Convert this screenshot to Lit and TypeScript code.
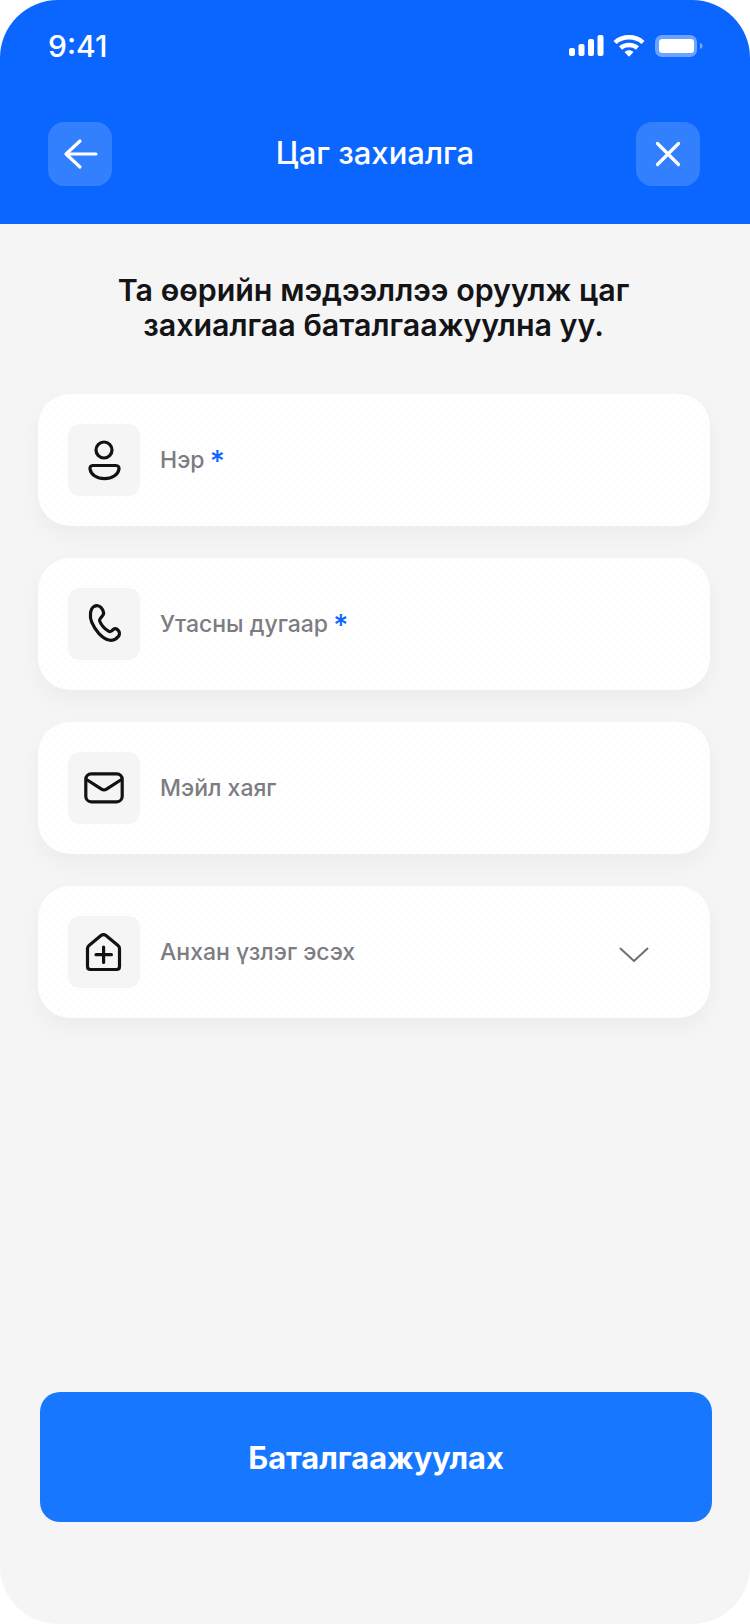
import { LitElement, css, html, svg } from "lit";
import { customElement } from "lit/decorators.js";

const personIcon = svg`
  <circle cx="36" cy="26" r="8" />
  <path d="M24.5 41.5H48C50 41.5 51.3 43 51 45C50.1 50.8 44 54.7 36.5 54.7C29 54.7 22.9 50.8 22 45C21.7 43 23 41.5 24.5 41.5Z" />
`;

const phoneIcon = svg`
  <path d="M26 18.5C29 16.8 32.3 18 34.1 20.8C35.7 23.3 35.9 25.9 34.7 27.5L32.3 30.4C31.5 31.4 31.4 32.4 31.9 33.6C33.7 37.6 36.7 40.9 40.5 43.2C41.6 43.8 42.7 43.7 43.6 42.9L45.2 41.6C46.5 40.5 48.3 40.6 49.5 41.7L50.4 42.6C51.8 44.2 51.9 46.8 50.3 48.6C48.1 51.4 44.3 52.8 40.9 52C34 50.3 27.1 42.4 23.7 34.2C21.5 29 21.9 21 26 18.5Z" />
`;

const mailIcon = svg`
  <rect x="17.8" y="21.8" width="36.4" height="28" rx="5.5" />
  <path d="M18.5 27.5L33.5 37.2C35.1 38.2 36.9 38.2 38.5 37.2L53.5 27.5" />
`;

const clinicIcon = svg`
  <path d="M33 19.6C34.5 18.4 36.5 18.4 38 19.6L50 29.4C51 30.2 51.5 31.2 51.5 32.4V50.5C51.5 52.4 50.4 53.5 48.5 53.5H22.5C20.6 53.5 19.5 52.4 19.5 50.5V32.4C19.5 31.2 20 30.2 21 29.4Z" />
  <path d="M35.6 31V46.5M28 38.7H43.4" />
`;

interface Field {
  label: string;
  required?: boolean;
  icon: unknown;
  select?: boolean;
}

const fields: Field[] = [
  { label: "Нэр", required: true, icon: personIcon },
  { label: "Утасны дугаар", required: true, icon: phoneIcon },
  { label: "Мэйл хаяг", icon: mailIcon },
  { label: "Анхан үзлэг эсэх", icon: clinicIcon, select: true },
];

@customElement("app-root")
export class AppRoot extends LitElement {
  static styles = css`
    :host {
      display: block;
      width: 750px;
      height: 1624px;
      background: #ffffff;
      font-family: "Inter", "Noto Sans", sans-serif;
    }

    .screen {
      display: flex;
      flex-direction: column;
      height: 100%;
      border-radius: 58px;
      overflow: hidden;
      background: #f5f5f6;
    }

    .header {
      display: flex;
      flex-direction: column;
      height: 224px;
      flex: none;
      background: #0a66ff;
      color: #ffffff;
    }

    .status {
      display: flex;
      align-items: center;
      justify-content: space-between;
      height: 36px;
      margin-top: 28px;
      padding: 0 46px 0 48px;
    }

    .time {
      font-size: 30px;
      font-weight: 500;
      line-height: 36px;
    }

    .status svg {
      display: block;
    }

    .nav {
      display: flex;
      align-items: center;
      justify-content: space-between;
      margin-top: 58px;
      padding: 0 50px 0 48px;
    }

    .nav-btn {
      display: flex;
      align-items: center;
      justify-content: center;
      width: 64px;
      height: 64px;
      border-radius: 16px;
      background: #3380ff;
    }

    .nav-btn svg {
      fill: none;
      stroke: #ffffff;
      stroke-width: 3.2;
      stroke-linecap: round;
      stroke-linejoin: round;
    }

    .title {
      padding: 0 0 2px 2px;
      font-size: 31px;
      font-weight: 500;
      line-height: 40px;
    }

    .lead {
      margin: 49px 0 0;
      padding-right: 3px;
      font-size: 30.4px;
      font-weight: 600;
      line-height: 35px;
      text-align: center;
      color: #141416;
    }

    .form {
      display: flex;
      flex-direction: column;
      gap: 32px;
      width: 672px;
      margin: 51px 0 0 38px;
    }

    .card {
      display: flex;
      align-items: center;
      gap: 20px;
      height: 132px;
      padding: 0 30px;
      box-sizing: border-box;
      border-radius: 32px;
      background-color: #ffffff;
      background-image: radial-gradient(circle, #f9f9f9 0.7px, transparent 1px),
        radial-gradient(circle, #f9f9f9 0.7px, transparent 1px);
      background-size: 8px 8px;
      background-position: 0 0, 4px 4px;
      box-shadow: 0 10px 24px rgba(20, 20, 30, 0.04);
    }

    .tile {
      width: 72px;
      height: 72px;
      flex: none;
      border-radius: 12px;
      background: #f5f5f6;
    }

    .tile svg {
      display: block;
      fill: none;
      stroke: #121214;
      stroke-width: 3.2;
      stroke-linecap: round;
      stroke-linejoin: round;
    }

    .label {
      flex: 1;
      font-size: 23px;
      font-weight: 500;
      line-height: 30px;
      color: #7c7c82;
    }

    .req {
      margin-left: -1px;
      color: #0a66ff;
      font-size: 29px;
      font-weight: 500;
      line-height: 0;
      vertical-align: -3px;
    }

    .chevron {
      flex: none;
      margin: 5px 31px 0 0;
      fill: none;
      stroke: #6e6e73;
      stroke-width: 2;
      stroke-linecap: round;
      stroke-linejoin: round;
    }

    .confirm {
      display: flex;
      align-items: center;
      justify-content: center;
      width: 672px;
      height: 130px;
      flex: none;
      margin: auto 0 102px 40px;
      border-radius: 20px;
      background: #1877ff;
      color: #ffffff;
      font-size: 30.8px;
      font-weight: 700;
    }
  `;

  private renderStatusIcons() {
    return html`
      <svg width="136" height="24" viewBox="0 0 136 24" fill="#ffffff">
        <rect x="1" y="14" width="6" height="8" rx="2" />
        <rect x="10.5" y="10" width="6" height="12" rx="2" />
        <rect x="20" y="5" width="6" height="17" rx="2" />
        <rect x="29.5" y="1" width="6" height="21" rx="2" />
        <g fill="none" stroke="#ffffff" stroke-width="4.4">
          <path d="M47 8.5C54.5 1.5 67.5 1.5 75 8.5" />
          <path d="M52.5 14C57 10 65 10 69.5 14" />
        </g>
        <path d="M56.5 18C59.2 15.8 62.8 15.8 65.5 18L61 22.8Z" />
        <rect x="89" y="3" width="38" height="18" rx="5" fill="none" stroke="#ffffff" stroke-opacity="0.4" stroke-width="4" />
        <rect x="91" y="5" width="35" height="14" rx="3" />
        <path d="M132 9V15C133.5 14.6 134.5 13.5 134.5 12C134.5 10.5 133.5 9.4 132 9Z" fill-opacity="0.45" />
      </svg>
    `;
  }

  private renderField(field: Field) {
    return html`
      <div class="card">
        <div class="tile">
          <svg width="72" height="72" viewBox="0 0 72 72">${field.icon}</svg>
        </div>
        <div class="label">
          ${field.label}${field.required
            ? html` <span class="req">*</span>`
            : ""}
        </div>
        ${field.select
          ? html`<svg class="chevron" width="30" height="16" viewBox="0 0 30 16">
              <path d="M1.5 1.5L15 14L28.5 1.5" />
            </svg>`
          : ""}
      </div>
    `;
  }

  render() {
    return html`
      <div class="screen">
        <div class="header">
          <div class="status">
            <span class="time">9:41</span>
            ${this.renderStatusIcons()}
          </div>
          <div class="nav">
            <div class="nav-btn">
              <svg width="36" height="32" viewBox="0 0 36 32">
                <path d="M34 16H4M18 3L4 16L18 29" />
              </svg>
            </div>
            <div class="title">Цаг захиалга</div>
            <div class="nav-btn">
              <svg width="28" height="28" viewBox="0 0 28 28">
                <path d="M3.5 3.5L24.5 24.5M24.5 3.5L3.5 24.5" />
              </svg>
            </div>
          </div>
        </div>
        <p class="lead">
          Та өөрийн мэдээллээ оруулж цаг<br />захиалгаа баталгаажуулна уу.
        </p>
        <div class="form">${fields.map((f) => this.renderField(f))}</div>
        <div class="confirm">Баталгаажуулах</div>
      </div>
    `;
  }
}
